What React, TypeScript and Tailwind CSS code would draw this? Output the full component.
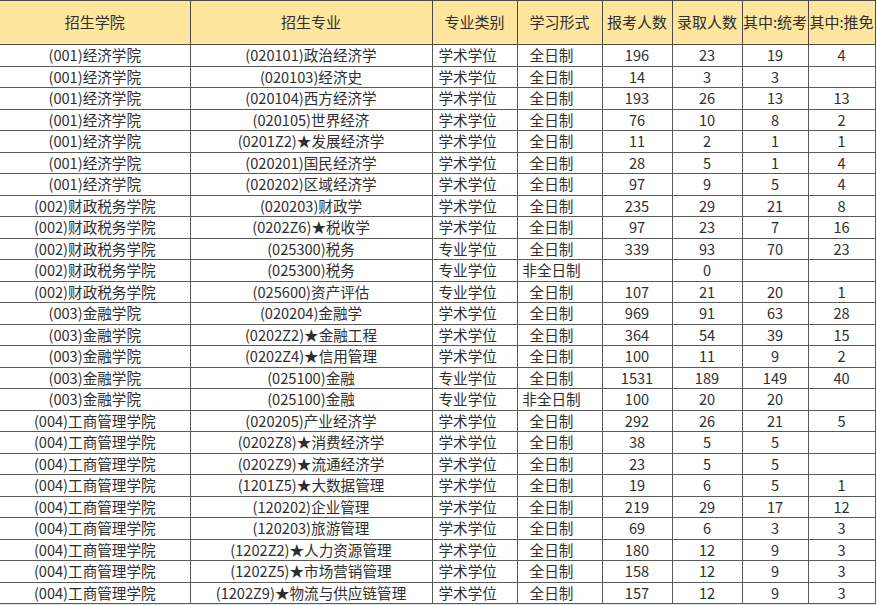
const HEAD = ["招生学院", "招生专业", "专业类别", "学习形式", "报考人数", "录取人数", "其中:统考", "其中:推免"];
const WIDTHS = ["w-[190px]", "w-[242px]", "w-[85px]", "w-[85px]", "w-[70px]", "w-[70px]", "w-[66px]", "w-[67px]"];

type Row = [string, string, string, string, string, string, string, string];

const A = "学术学位";
const P = "专业学位";
const F = "全日制";
const N = "非全日制";

const ROWS: Row[] = [
  ["(001)经济学院", "(020101)政治经济学", A, F, "196", "23", "19", "4"],
  ["(001)经济学院", "(020103)经济史", A, F, "14", "3", "3", ""],
  ["(001)经济学院", "(020104)西方经济学", A, F, "193", "26", "13", "13"],
  ["(001)经济学院", "(020105)世界经济", A, F, "76", "10", "8", "2"],
  ["(001)经济学院", "(0201Z2)★发展经济学", A, F, "11", "2", "1", "1"],
  ["(001)经济学院", "(020201)国民经济学", A, F, "28", "5", "1", "4"],
  ["(001)经济学院", "(020202)区域经济学", A, F, "97", "9", "5", "4"],
  ["(002)财政税务学院", "(020203)财政学", A, F, "235", "29", "21", "8"],
  ["(002)财政税务学院", "(0202Z6)★税收学", A, F, "97", "23", "7", "16"],
  ["(002)财政税务学院", "(025300)税务", P, F, "339", "93", "70", "23"],
  ["(002)财政税务学院", "(025300)税务", P, N, "", "0", "", ""],
  ["(002)财政税务学院", "(025600)资产评估", P, F, "107", "21", "20", "1"],
  ["(003)金融学院", "(020204)金融学", A, F, "969", "91", "63", "28"],
  ["(003)金融学院", "(0202Z2)★金融工程", A, F, "364", "54", "39", "15"],
  ["(003)金融学院", "(0202Z4)★信用管理", A, F, "100", "11", "9", "2"],
  ["(003)金融学院", "(025100)金融", P, F, "1531", "189", "149", "40"],
  ["(003)金融学院", "(025100)金融", P, N, "100", "20", "20", ""],
  ["(004)工商管理学院", "(020205)产业经济学", A, F, "292", "26", "21", "5"],
  ["(004)工商管理学院", "(0202Z8)★消费经济学", A, F, "38", "5", "5", ""],
  ["(004)工商管理学院", "(0202Z9)★流通经济学", A, F, "23", "5", "5", ""],
  ["(004)工商管理学院", "(1201Z5)★大数据管理", A, F, "19", "6", "5", "1"],
  ["(004)工商管理学院", "(120202)企业管理", A, F, "219", "29", "17", "12"],
  ["(004)工商管理学院", "(120203)旅游管理", A, F, "69", "6", "3", "3"],
  ["(004)工商管理学院", "(1202Z2)★人力资源管理", A, F, "180", "12", "9", "3"],
  ["(004)工商管理学院", "(1202Z5)★市场营销管理", A, F, "158", "12", "9", "3"],
  ["(004)工商管理学院", "(1202Z9)★物流与供应链管理", A, F, "157", "12", "9", "3"],
];

function cellAlign(i: number) {
  if (i === 2) return "text-left pl-[6px]";
  if (i === 3) return "text-center pr-[16px]";
  return "text-center";
}

export default function App() {
  return (
    <div
      className="h-[605px] w-[877px] overflow-hidden bg-white text-[#2e2e2e]"
      style={{ fontFamily: '"Noto Sans CJK SC", "Noto Sans", sans-serif' }}
    >
      <table className="w-[875px] table-fixed border-collapse">
        <colgroup>
          {WIDTHS.map((w, i) => (
            <col key={i} className={w} />
          ))}
        </colgroup>
        <thead>
          <tr className="h-[44px] bg-[#ffe59d]">
            {HEAD.map((h, i) => (
              <th
                key={h}
                className={`border-t border-b border-[#4a4a4a] p-0 text-[15px] font-normal whitespace-nowrap ${
                  i > 0 ? "border-l" : ""
                } ${i === 7 ? "border-r" : ""}`}
              >
                {h}
              </th>
            ))}
          </tr>
        </thead>
        <tbody>
          {ROWS.map((r, ri) => (
            <tr key={ri} className="h-[21.5px]">
              {r.map((c, i) => (
                <td
                  key={i}
                  className={`border-b border-[#5a5a5a] p-0 text-[14.6px] leading-[20px] whitespace-nowrap ${
                    i > 0 ? "border-l" : ""
                  } ${i === 7 ? "border-r" : ""} ${cellAlign(i)}`}
                >
                  {c}
                </td>
              ))}
            </tr>
          ))}
        </tbody>
      </table>
      <div className="h-[2px] w-full bg-[#d6e6ea]" />
    </div>
  );
}
